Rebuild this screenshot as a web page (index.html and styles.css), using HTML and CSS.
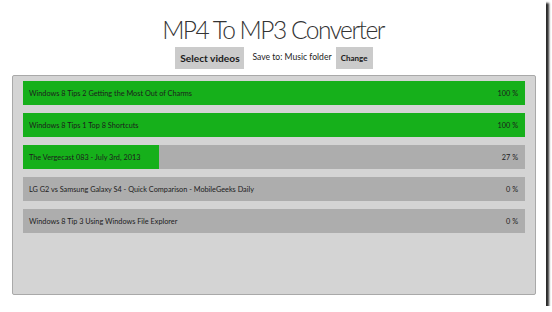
FILE: index.html
```html
<!DOCTYPE html>
<html lang="en">
<head>
    <meta charset="UTF-8">
    <title>MP4 To MP3 Converter</title>
    <link rel="stylesheet" href="styles.css">
</head>
<body>
    <div class="screen">
        <h1 class="title">MP4 To MP3 Converter</h1>

        <div class="toolbar">
            <button class="btn btn-big">Select videos</button>
            <span class="save-to">Save to: Music folder</span>
            <button class="btn btn-small">Change</button>
        </div>

        <!-- conversion queue -->
        <div class="queue">
            <div class="item">
                <div class="fill" style="width: 100%"></div>
                <span class="name">Windows 8 Tips 2 Getting the Most Out of Charms</span>
                <span class="pct">100 %</span>
            </div>
            <div class="item">
                <div class="fill" style="width: 100%"></div>
                <span class="name">Windows 8 Tips 1 Top 8 Shortcuts</span>
                <span class="pct">100 %</span>
            </div>
            <div class="item">
                <div class="fill" style="width: 27%"></div>
                <span class="name">The Vergecast 083 - July 3rd, 2013</span>
                <span class="pct">27 %</span>
            </div>
            <div class="item">
                <div class="fill" style="width: 0%"></div>
                <span class="name">LG G2 vs Samsung Galaxy S4 - Quick Comparison - MobileGeeks Daily</span>
                <span class="pct">0 %</span>
            </div>
            <div class="item">
                <div class="fill" style="width: 0%"></div>
                <span class="name">Windows 8 Tip 3 Using Windows File Explorer</span>
                <span class="pct">0 %</span>
            </div>
        </div>
    </div>
</body>
</html>
```

FILE: styles.css
```css
/* Basic Styling */
body {
    margin: 0;
    background-color: #fff;
    font-family: Lato, "Open Sans", sans-serif;
    color: #1c1c1c;
}

.screen {
    width: 546px;
    height: 306px;
    background-color: #fff;
    box-shadow: 3px 3px 2px #2a2a2a;
    overflow: hidden;
}

.title {
    margin: 0;
    padding-top: 15px;
    font-size: 24.5px;
    font-weight: 300;
    letter-spacing: -1.5px;
    line-height: 30px;
    text-align: center;
    color: #333;
}

.toolbar {
    display: flex;
    justify-content: center;
    align-items: center;
    gap: 3px;
    margin-top: 2px;
    padding-left: 2px;
}

.btn {
    border: none;
    background-color: #cbcbcb;
    color: #1a1a1a;
    font-family: inherit;
    font-weight: 700;
    padding: 0;
    height: 22px;
}

.btn-big {
    width: 69px;
    font-size: 10.2px;
}

.btn-small {
    width: 37px;
    font-size: 8px;
}

.save-to {
    font-size: 8.6px;
    margin: 0 1px 0 5px;
    padding-bottom: 2px;
}

.queue {
    margin: 6px 10px 0 12px;
    height: 220px;
    box-sizing: border-box;
    padding: 5px 10px;
    background-color: #d4d4d4;
    border: 1px solid #a9a9a9;
    border-radius: 2px;
    display: flex;
    flex-direction: column;
    gap: 8px;
}

.item {
    position: relative;
    height: 24px;
    background-color: #adadad;
    display: flex;
    justify-content: space-between;
    align-items: center;
    padding: 0 7px 0 6px;
    font-size: 7.3px;
}

.fill {
    position: absolute;
    left: 0;
    top: 0;
    bottom: 0;
    background-color: #16b01b;
}

.name,
.pct {
    position: relative;
}
```
